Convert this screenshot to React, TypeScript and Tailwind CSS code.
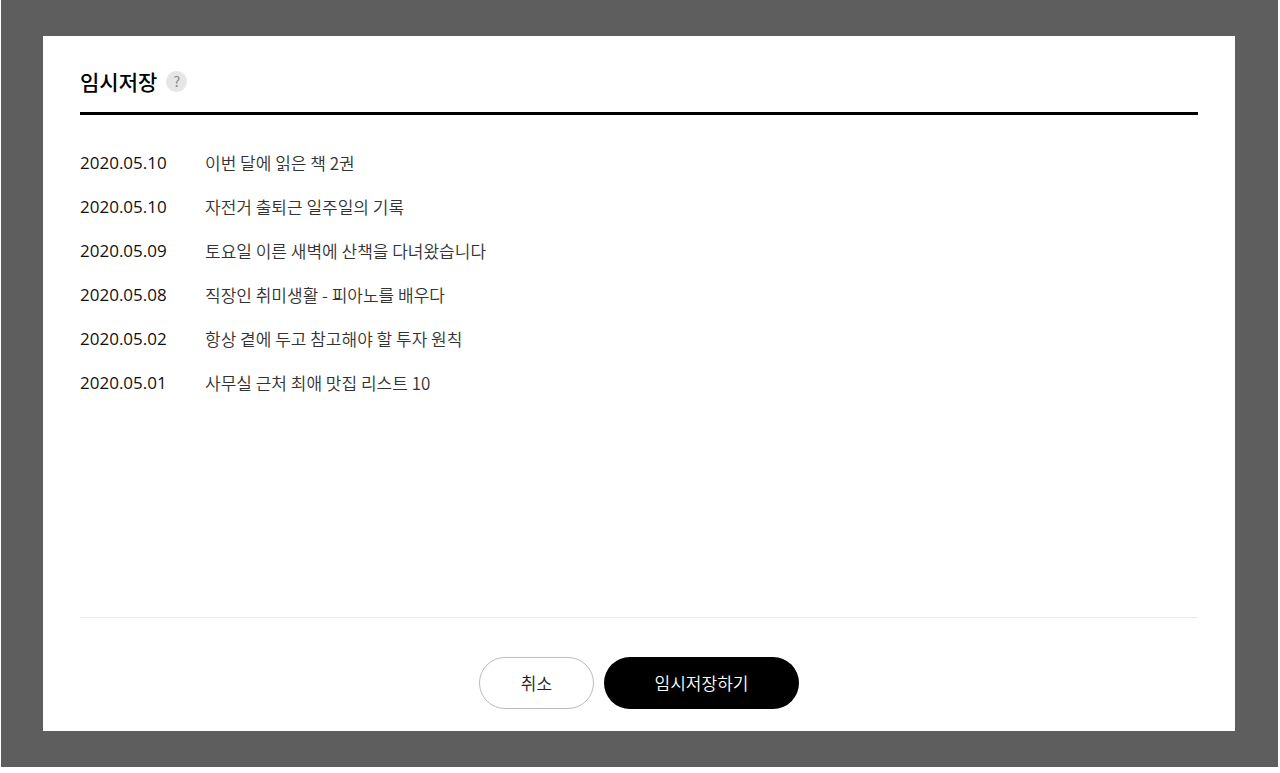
const drafts = [
  { date: '2020.05.10', title: '이번 달에 읽은 책 2권' },
  { date: '2020.05.10', title: '자전거 출퇴근 일주일의 기록' },
  { date: '2020.05.09', title: '토요일 이른 새벽에 산책을 다녀왔습니다' },
  { date: '2020.05.08', title: '직장인 취미생활 - 피아노를 배우다' },
  { date: '2020.05.02', title: '항상 곁에 두고 참고해야 할 투자 원칙' },
  { date: '2020.05.01', title: '사무실 근처 최애 맛집 리스트 10' },
];

function DraftList() {
  return (
    <ul className="min-h-[476px] grow">
      {drafts.map((draft) => (
        <li key={draft.title} className="flex h-11 items-center text-[17px] leading-6">
          <time className="w-[125px] shrink-0 font-['Open_Sans',sans-serif] text-[#111]">{draft.date}</time>
          <a href="#" className="font-[350] text-[#333]">
            {draft.title}
          </a>
        </li>
      ))}
    </ul>
  );
}

export default function App() {
  return (
    <div className="flex min-h-screen flex-col bg-white pr-0.5 pb-1.5 pl-px font-['Noto_Sans_CJK_KR',sans-serif]">
      <div className="flex grow flex-col bg-[#5e5e5e] py-9 pr-[43px] pl-[42px]">
        <main
          role="dialog"
          aria-labelledby="drafts-title"
          className="flex grow flex-col bg-white px-[37px] pt-7 pb-[22px]"
        >
          <header className="flex items-center gap-[9px] border-b-3 border-black pb-3.5">
            <h1 id="drafts-title" className="text-[21px] leading-[34px] font-medium text-black">
              임시저장
            </h1>
            <button
              type="button"
              aria-label="도움말"
              className="flex size-[21px] items-center justify-center rounded-full bg-[#e6e6e6] text-[14px] leading-5 text-[#888]"
            >
              ?
            </button>
          </header>
          <div className="flex grow flex-col border-b border-[#eaeaea] pt-[26px]">
            <DraftList />
          </div>
          <footer className="flex justify-center gap-2.5 pt-[39px]">
            <button
              type="button"
              className="h-[52px] w-[115px] rounded-full border border-[#bbb] bg-white text-[17px] font-[350] text-[#222]"
            >
              취소
            </button>
            <button
              type="button"
              className="h-[52px] w-[195px] rounded-full bg-black text-[17px] font-[350] text-white"
            >
              임시저장하기
            </button>
          </footer>
        </main>
      </div>
    </div>
  );
}
